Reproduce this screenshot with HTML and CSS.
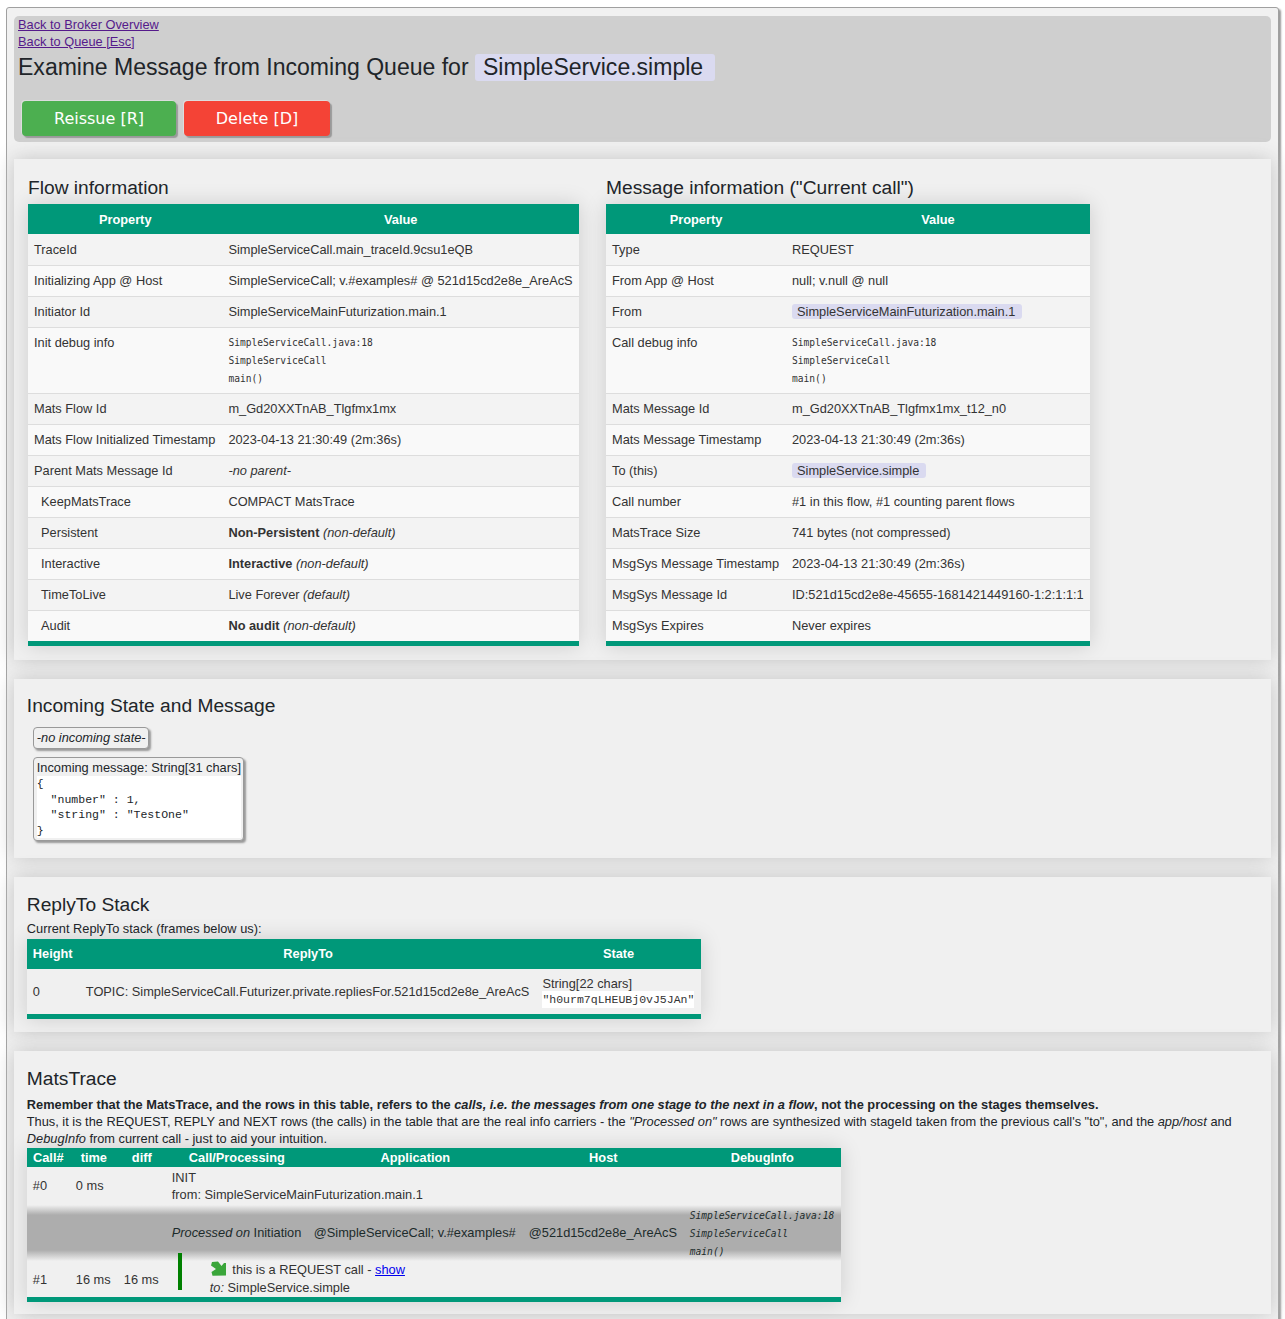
FILE: index.html
```html
<!DOCTYPE html>
<html lang="en">
<head>
<meta charset="utf-8">
<title>Examine Message</title>
<link rel="stylesheet" href="styles.css">
</head>
<body>
<div class="report">
  <header class="top">
    <a class="back" href="#broker">Back to Broker Overview</a>
    <a class="back" href="#queue">Back to Queue [Esc]</a>
    <h1 class="title">Examine Message from Incoming Queue for <span class="qid">SimpleService.simple</span></h1>
    <div class="actions">
      <button class="btn green">Reissue [R]</button>
      <button class="btn red">Delete [D]</button>
    </div>
  </header>

  <section class="card info-card">
    <div class="info-col">
      <h2 class="h2">Flow information</h2>
      <table class="tbl info flow">
        <thead><tr><th>Property</th><th>Value</th></tr></thead>
        <tbody>
          <tr><td>TraceId</td><td>SimpleServiceCall.main_traceId.9csu1eQB</td></tr>
          <tr><td>Initializing App @ Host</td><td>SimpleServiceCall; v.#examples# @ 521d15cd2e8e_AreAcS</td></tr>
          <tr><td>Initiator Id</td><td>SimpleServiceMainFuturization.main.1</td></tr>
          <tr><td>Init debug info</td><td class="debug">SimpleServiceCall.java:18<br>SimpleServiceCall<br>main()</td></tr>
          <tr><td>Mats Flow Id</td><td>m_Gd20XXTnAB_Tlgfmx1mx</td></tr>
          <tr><td>Mats Flow Initialized Timestamp</td><td>2023-04-13 21:30:49 (2m:36s)</td></tr>
          <tr><td>Parent Mats Message Id</td><td><i>-no parent-</i></td></tr>
          <tr><td class="ind">KeepMatsTrace</td><td>COMPACT MatsTrace</td></tr>
          <tr><td class="ind">Persistent</td><td><b>Non-Persistent</b> <i>(non-default)</i></td></tr>
          <tr><td class="ind">Interactive</td><td><b>Interactive</b> <i>(non-default)</i></td></tr>
          <tr><td class="ind">TimeToLive</td><td>Live Forever <i>(default)</i></td></tr>
          <tr><td class="ind">Audit</td><td><b>No audit</b> <i>(non-default)</i></td></tr>
        </tbody>
      </table>
    </div>
    <div class="info-col">
      <h2 class="h2">Message information ("Current call")</h2>
      <table class="tbl info msg">
        <thead><tr><th>Property</th><th>Value</th></tr></thead>
        <tbody>
          <tr><td>Type</td><td>REQUEST</td></tr>
          <tr><td>From App @ Host</td><td>null; v.null @ null</td></tr>
          <tr><td>From</td><td><span class="chip">SimpleServiceMainFuturization.main.1</span></td></tr>
          <tr><td>Call debug info</td><td class="debug">SimpleServiceCall.java:18<br>SimpleServiceCall<br>main()</td></tr>
          <tr><td>Mats Message Id</td><td>m_Gd20XXTnAB_Tlgfmx1mx_t12_n0</td></tr>
          <tr><td>Mats Message Timestamp</td><td>2023-04-13 21:30:49 (2m:36s)</td></tr>
          <tr><td>To (this)</td><td><span class="chip">SimpleService.simple</span></td></tr>
          <tr><td>Call number</td><td>#1 in this flow, #1 counting parent flows</td></tr>
          <tr><td>MatsTrace Size</td><td>741 bytes (not compressed)</td></tr>
          <tr><td>MsgSys Message Timestamp</td><td>2023-04-13 21:30:49 (2m:36s)</td></tr>
          <tr><td>MsgSys Message Id</td><td>ID:521d15cd2e8e-45655-1681421449160-1:2:1:1:1</td></tr>
          <tr><td>MsgSys Expires</td><td>Never expires</td></tr>
        </tbody>
      </table>
    </div>
  </section>

  <section class="card state-card">
    <h2 class="h2">Incoming State and Message</h2>
    <div class="box"><i>-no incoming state-</i></div>
    <div class="box">Incoming message: String[31 chars]
      <pre class="json">{
  "number" : 1,
  "string" : "TestOne"
}</pre>
    </div>
  </section>

  <section class="card stack-card">
    <h2 class="h2">ReplyTo Stack</h2>
    <div class="line">Current ReplyTo stack (frames below us):</div>
    <table class="tbl stack">
      <thead><tr><th class="left">Height</th><th>ReplyTo</th><th>State</th></tr></thead>
      <tbody>
        <tr><td>0</td><td>TOPIC: SimpleServiceCall.Futurizer.private.repliesFor.521d15cd2e8e_AreAcS</td><td>String[22 chars]<br><code class="state">"h0urm7qLHEUBj0vJ5JAn"</code></td></tr>
      </tbody>
    </table>
  </section>

  <section class="card trace-card">
    <h2 class="h2">MatsTrace</h2>
    <div class="line"><b>Remember that the MatsTrace, and the rows in this table, refers to the <i>calls, i.e. the messages from one stage to the next in a flow</i>, not the processing on the stages themselves.</b></div>
    <div class="line">Thus, it is the REQUEST, REPLY and NEXT rows (the calls) in the table that are the real info carriers - the <i>"Processed on"</i> rows are synthesized with stageId taken from the previous call's "to", and the <i>app/host</i> and <i>DebugInfo</i> from current call - just to aid your intuition.</div>
    <table class="tbl trace">
      <thead><tr><th>Call#</th><th>time</th><th>diff</th><th>Call/Processing</th><th>Application</th><th>Host</th><th>DebugInfo</th></tr></thead>
      <tbody>
        <tr class="call-row"><td class="num">#0</td><td class="num">0 ms</td><td></td><td colspan="4">INIT<br>from: SimpleServiceMainFuturization.main.1</td></tr>
        <tr class="proc-row"><td></td><td></td><td></td><td><i>Processed on</i> Initiation</td><td>@SimpleServiceCall; v.#examples#</td><td>@521d15cd2e8e_AreAcS</td><td class="debug"><i>SimpleServiceCall.java:18<br>SimpleServiceCall<br>main()</i></td></tr>
        <tr class="call-row req-row"><td>#1</td><td>16 ms</td><td>16 ms</td><td colspan="4">
          <div class="req">
            <span class="req-bar"></span>
            <div class="req-text">
              <div><svg class="arrow" width="16" height="16" viewBox="0 0 16 16" aria-hidden="true"><path d="M1 1 L7 0.5 L10.5 5 L13 2 L15 2 L15 14.5 L1.5 14.7 L0.5 11 L5 8 L0 4.5 Z" fill="#3aa63a"/></svg> this is a REQUEST call - <a class="show" href="#show">show</a></div>
              <div><i>to:</i> SimpleService.simple</div>
            </div>
          </div>
        </td></tr>
      </tbody>
    </table>
  </section>
</div>
</body>
</html>
```
FILE: styles.css
```css
* { box-sizing: border-box; }
html, body { margin: 0; background: #fff; }
body { font-family: "Liberation Sans", Arial, sans-serif; font-size: 12.8px; color: #212529; line-height: 17px; }
.report { margin: 7px 6px 0 6px; padding: 8px 7px 14px 7px; background: #f1f1f1; border: 1px solid #a0a0a0; border-radius: 3px; box-shadow: 2px 2px 2px #999; display: flex; flex-direction: column; gap: 19px; }
.top { background: #cfcfcf; border-radius: 5px; padding: 0 4px 4px 4px; margin-bottom: -2px; height: 126px; }
.back { display: block; color: #551a8b; height: 17px; }
.title { font-size: 23.04px; font-weight: 400; line-height: 28px; margin: 3px 0 0; display: block; color: #212529; height: 28px; }
.qid { background: #dadaf0; padding: 0 12px 1px 8px; border-radius: 3px; }
.actions { display: flex; gap: 8px; margin-top: 20px; padding-left: 4px; }
.btn { font-family: "DejaVu Sans", sans-serif; font-size: 16px; color: #fff; border: 0; height: 35px; border-radius: 4px; box-shadow: 2px 2px 1px #999, -1px -1px 0 #ddd; padding: 0; }
.green { background: #4caf50; width: 154px; }
.red { background: #f44336; width: 146px; }
.card { background: #f0f0f0; box-shadow: 0 0 20px #c4c4c4; }
.info-card { display: flex; gap: 27px; padding: 18px 13px 14px 14px; height: 501px; }
.h2 { font-size: 19.2px; font-weight: 400; line-height: 22px; margin: 0; color: #212529; }
.info-col .h2 { margin-bottom: 5px; }
.tbl { border-collapse: collapse; box-shadow: 0 0 20px rgba(0,0,0,.15); border-bottom: 5px solid #009879; font-size: 12.8px; }
.tbl th { background: #009879; color: #fff; font-weight: 700; padding: 0 6px; text-align: center; height: 30px; }
.tbl td { padding: 0 6px; color: #333; }
.info tbody tr { background: #f9f9f9; border-bottom: 1px solid #ddd; }
.info tbody tr:nth-child(odd) { background: #f3f3f3; }
.info td { height: 31px; vertical-align: middle; white-space: nowrap; }
.info tbody tr:last-child td { height: 33px; }
.info tr:has(.debug) td { vertical-align: top; padding-top: 6px; padding-bottom: 5px; }
.info .debug, .trace .debug { font-family: "DejaVu Sans Mono", monospace; font-size: 9.6px; line-height: 18px; }
.flow { width: 551px; }
.flow td:first-child, .flow th:first-child { width: 194.4px; }
.msg { width: 484px; }
.msg td:first-child, .msg th:first-child { width: 180px; }
.ind { padding-left: 13px !important; }
.chip { background: #dadaf0; border-radius: 3px; padding: 0 7px 0 5px; }
.state-card { padding: 16px 13px 16px 12.8px; height: 179px; }
.state-card .h2 { margin-bottom: 10px; }
.box { width: fit-content; margin: 0 0 8px 6px; padding: 2px 2px 2px 3px; border: 1px solid #999; border-radius: 4px; background: #f0f0f0; box-shadow: 2px 2px 2px #999; line-height: 16px; }
.json { margin: 0; padding: 0; background: #fff; font-family: "Liberation Mono", monospace; font-size: 11.52px; line-height: 15.5px; }
.stack-card { padding: 17px 13px 13px 12.8px; height: 155px; }
.stack-card .h2 { margin-bottom: 4px; }
.line { line-height: 17px; }
.stack { margin-top: 2px; width: 674px; }
.stack th { padding-bottom: 2px; }
.stack td { background: #f0f0f0; height: 47px; padding-top: 0; white-space: nowrap; line-height: 15px; }
.stack .left { text-align: left; }
.stack td:first-child { width: 53px; }
.state { font-family: "Liberation Mono", monospace; font-size: 11.52px; background: #fff; padding: 2px 0; }
.trace-card { padding: 17px 13px 13px 12.8px; height: 263px; }
.trace-card .h2 { margin-bottom: 6px; }
.trace { width: 814px; margin-top: 1px; table-layout: fixed; }
.trace th { height: 19px; padding: 0 6px; }
.trace th:nth-child(1) { width: 43px; }
.trace th:nth-child(2), .trace th:nth-child(3) { width: 48px; }
.trace th:nth-child(4) { width: 142px; }
.trace th:nth-child(5) { width: 215px; }
.trace th:nth-child(6) { width: 161px; }
.trace th:nth-child(7) { width: 157px; }
.trace td { white-space: nowrap; padding: 0 6px; }
.trace td.num { padding-bottom: 2px; }
.call-row { background: #f0f0f0; }
.call-row > td { height: 38px; line-height: 17px; }
.proc-row td { height: 53px; padding-bottom: 1px; background: linear-gradient(#f0f0f0 0, #adadad 10px, #adadad 45px, #f0f0f0 100%); color: #1c2b2b; }
.proc-row .debug { padding-top: 2px; padding-bottom: 0; }
.req-row > td { height: 36px; }
.req { display: flex; gap: 28px; align-items: flex-start; margin-left: 6px; }
.req-bar { width: 4px; height: 37px; background: #008000; margin-top: -8px; }
.req-text { line-height: 18px; }
.arrow { vertical-align: -3px; margin: 0 2px 0 1px; }
.show { color: #0000ee; }
```
